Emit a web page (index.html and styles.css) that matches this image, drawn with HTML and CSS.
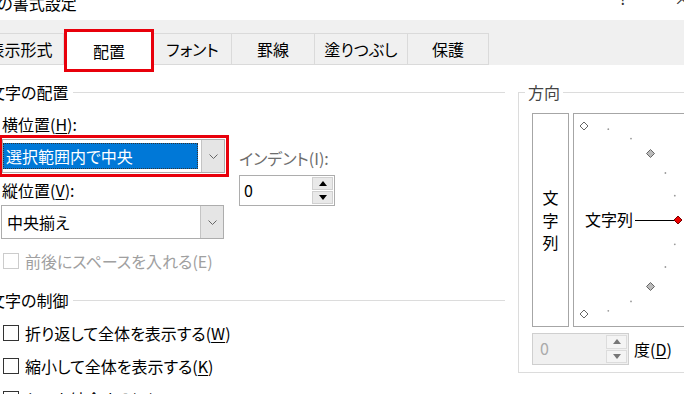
FILE: index.html
```html
<!DOCTYPE html>
<html lang="ja">
<head>
    <meta charset="UTF-8">
    <title>セルの書式設定</title>
    <link rel="stylesheet" href="styles.css">
</head>
<body>
    <div class="dialog">
        <div class="titlebar">
            <span class="title">セルの書式設定</span>
            <span class="tbtn help">?</span>
            <span class="tbtn close">×</span>
        </div>

        <div class="tabband">
            <div class="tab t1">表示形式</div>
            <div class="tab tab-on t2">配置</div>
            <div class="tab t3">フォント</div>
            <div class="tab t4">罫線</div>
            <div class="tab t5">塗りつぶし</div>
            <div class="tab t6">保護</div>
        </div>

        <div class="content">
            <div class="leftcol">
                <div class="heading"><span>文字の配置</span><i class="rule"></i></div>

                <div class="align-body">
                    <div class="selects">
                        <div class="lbl">横位置(<u>H</u>):</div>
                        <div class="mark">
                            <div class="select">
                                <span class="sel-val"><span class="hl">選択範囲内で中央</span></span>
                                <span class="sel-btn"><svg width="9" height="5"><path d="M0.5 0.5 L4.5 4.5 L8.5 0.5" fill="none" stroke="#666"/></svg></span>
                            </div>
                        </div>
                        <div class="lbl lbl-v">縦位置(<u>V</u>):</div>
                        <div class="select sel-v">
                            <span class="sel-val plain">中央揃え</span>
                            <span class="sel-btn"><svg width="9" height="5"><path d="M0.5 0.5 L4.5 4.5 L8.5 0.5" fill="none" stroke="#666"/></svg></span>
                        </div>
                    </div>
                    <div class="indent">
                        <div class="lbl-gray">インデント(I):</div>
                        <div class="spin">
                            <span class="spin-val">0</span>
                            <span class="spin-btns">
                                <b><svg width="8" height="5"><path d="M0 5 L4 0 L8 5Z" fill="#000"/></svg></b>
                                <b><svg width="8" height="5"><path d="M0 0 L4 5 L8 0Z" fill="#000"/></svg></b>
                            </span>
                        </div>
                    </div>
                </div>

                <div class="checks">
                    <div class="check off"><span class="box"></span><span>前後にスペースを入れる(E)</span></div>
                </div>

                <div class="heading h2"><span>文字の制御</span><i class="rule"></i></div>

                <div class="checks">
                    <div class="check"><span class="box"></span><span>折り返して全体を表示する(<u>W</u>)</span></div>
                    <div class="check"><span class="box"></span><span>縮小して全体を表示する(<u>K</u>)</span></div>
                    <div class="check"><span class="box"></span><span>セルを結合する(<u>M</u>)</span></div>
                </div>
            </div>

            <fieldset class="orient">
                <legend>方向</legend>
                <div class="orient-boxes">
                    <div class="vtext"><span>文</span><span>字</span><span>列</span></div>
                    <div class="dial">
                        <svg width="150" height="212">
                            <g fill="#999">
                                <circle cx="34.3" cy="15.2" r="0.9"/>
                                <circle cx="57" cy="24.6" r="0.9"/>
                                <circle cx="91.4" cy="59" r="0.9"/>
                                <circle cx="100.8" cy="81.7" r="0.9"/>
                                <circle cx="100.8" cy="130.3" r="0.9"/>
                                <circle cx="91.4" cy="153" r="0.9"/>
                                <circle cx="57" cy="187.4" r="0.9"/>
                                <circle cx="34.3" cy="196.8" r="0.9"/>
                            </g>
                            <g stroke="#666" stroke-width="1">
                                <polygon points="10,8 14,12 10,16 6,12" fill="#fff"/>
                                <polygon points="76.5,35.5 80.5,39.5 76.5,43.5 72.5,39.5" fill="#bbb"/>
                                <polygon points="76.5,168.5 80.5,172.5 76.5,176.5 72.5,172.5" fill="#bbb"/>
                                <polygon points="10,196 14,200 10,204 6,200" fill="#fff"/>
                            </g>
                            <line x1="61" y1="106.5" x2="100" y2="106.5" stroke="#000"/>
                            <polygon points="104,102 108,106 104,110 100,106" fill="#e00" stroke="#700"/>
                            <text x="11" y="112" class="dial-text">文字列</text>
                        </svg>
                    </div>
                </div>
                <div class="deg-row">
                    <div class="spin deg">
                        <span class="spin-val">0</span>
                        <span class="spin-btns">
                            <b><svg width="8" height="5"><path d="M0 5 L4 0 L8 5Z" fill="#777"/></svg></b>
                            <b><svg width="8" height="5"><path d="M0 0 L4 5 L8 0Z" fill="#777"/></svg></b>
                        </span>
                    </div>
                    <span class="deg-lbl">度(<u>D</u>)</span>
                </div>
            </fieldset>
        </div>
    </div>
</body>
</html>
```

FILE: styles.css
```css
* {
    margin: 0;
    padding: 0;
    box-sizing: border-box;
}

body {
    background-color: #fff;
    overflow: hidden;
    font-family: "Noto Sans CJK JP", "Noto Sans", sans-serif;
    font-size: 16px;
    color: #000;
    font-feature-settings: "palt";
}

u {
    text-decoration: underline;
    text-underline-offset: 2px;
}

.dialog {
    margin-left: -22px;
    width: 780px;
}

/* タイトルバー */
.titlebar {
    height: 20px;
    overflow: hidden;
    display: flex;
    gap: 39px;
    width: 740px;
    padding-right: 26px;
    background-color: #fff;
}

.title {
    margin: -7px 0 0 -11px;
    line-height: 20px;
}

.tbtn {
    width: 20px;
    text-align: center;
    line-height: 20px;
    margin-top: -12px;
    color: #333;
}

.help {
    margin-left: auto;
}

/* タブ */
.tabband {
    height: 45px;
    background-color: #f0f0f0;
    display: flex;
    align-items: flex-end;
}

.tab {
    height: 32px;
    border: 1px solid #dadada;
    border-left: none;
    background-color: #f0f0f0;
    display: flex;
    justify-content: center;
    align-items: center;
    flex-shrink: 0;
}

.t1 { width: 86px; }
.t2 { width: 90px; }
.t3 { width: 78px; }
.t4 { width: 83px; }
.t5 { width: 93px; }
.t6 { width: 81px; }

.tab-on {
    height: 43px;
    margin-bottom: -7px;
    border: 3px solid #e8000b;
    background-color: #fff;
    position: relative;
    z-index: 1;
}

/* 本体 */
.content {
    display: flex;
    padding: 16px 0 0 11px;
}

.leftcol {
    width: 516px;
    flex-shrink: 0;
}

.heading {
    display: flex;
    align-items: center;
    gap: 5px;
    line-height: 22px;
}

.rule {
    flex: 1;
    height: 1px;
    background-color: #dcdcdc;
}

.h2 {
    margin-top: 17px;
}

.align-body {
    display: flex;
    padding-left: 12px;
    margin-top: 10px;
}

.selects {
    width: 228px;
}

.lbl {
    line-height: 22px;
    padding-left: 1px;
}

.lbl-v {
    margin-top: 2px;
}

.mark {
    width: 230px;
    margin-left: -2px;
    border: 3px solid #e8000b;
    padding: 1px 1px 1px 0;
}

.select {
    height: 34px;
    border: 1px solid #adadad;
    background-color: #fff;
    display: flex;
}

.sel-v {
    width: 223px;
    margin-top: 4px;
}

.sel-val {
    flex: 1;
    display: flex;
    align-items: center;
    padding: 3px 3px 3px 0;
}

.sel-val.plain {
    padding-left: 5px;
}

.hl {
    flex: 1;
    height: 100%;
    background-color: #0078d7;
    color: #fff;
    padding-left: 3px;
    line-height: 26px;
    outline: 1px dotted #333;
    outline-offset: -1px;
}

.sel-btn {
    width: 23px;
    background-color: #e5e5e5;
    border-left: 1px solid #c4c4c4;
    display: flex;
    justify-content: center;
    align-items: center;
}

.indent {
    margin-left: 10px;
    padding-top: 34px;
}

.lbl-gray {
    line-height: 22px;
    color: #6d6d6d;
}

.spin {
    display: flex;
    width: 96px;
    height: 31px;
    margin-top: 6px;
    border: 1px solid #adadad;
    background-color: #fff;
}

.spin-val {
    flex: 1;
    padding-left: 4px;
    line-height: 29px;
}

.spin-btns {
    width: 21px;
    margin: 1px 1px 1px 0;
    display: flex;
    flex-direction: column;
    gap: 1px;
    background-color: #fff;
}

.spin-btns b {
    flex: 1;
    display: flex;
    justify-content: center;
    align-items: center;
    background-color: #e9e9e9;
    border: 1px solid #d0d0d0;
}

/* チェックボックス */
.checks {
    padding-left: 14px;
}

.check {
    display: flex;
    align-items: center;
    gap: 6px;
    line-height: 22px;
    margin-top: 11px;
}

.checks:first-of-type .check {
    margin-top: 8px;
}

.box {
    width: 16px;
    height: 16px;
    border: 1px solid #333;
    background-color: #fff;
}

.check.off {
    color: #a0a0a0;
}

.check.off .box {
    border-color: #ccc;
}

/* 方向 */
.orient {
    margin: 0 0 0 13px;
    border: 1px solid #dcdcdc;
    padding: 10px 0 7px 13px;
    width: 220px;
    min-width: 0;
    flex-shrink: 0;
    align-self: flex-start;
}

.orient legend {
    margin-left: -7px;
    padding: 0 3px;
    line-height: 22px;
    color: #444;
}

.orient-boxes {
    display: flex;
    gap: 4px;
}

.vtext {
    width: 37px;
    height: 214px;
    border: 1px solid #a6a6a6;
    display: flex;
    flex-direction: column;
    justify-content: center;
    align-items: center;
    line-height: 22.5px;
}

.dial {
    width: 152px;
    height: 214px;
    border: 1px solid #a6a6a6;
    flex-shrink: 0;
}

.dial svg {
    display: block;
}

.dial-text {
    font-family: "Noto Sans CJK JP", sans-serif;
    font-size: 16px;
    font-feature-settings: "palt";
}

.deg-row {
    display: flex;
    align-items: center;
    margin-top: 6px;
}

.spin.deg {
    width: 97px;
    height: 32px;
    margin-top: 0;
    background-color: #f0f0f0;
    border-color: #cfcfcf;
    color: #aaa;
}

.spin.deg .spin-val {
    padding-left: 7px;
}

.spin.deg .spin-btns {
    background-color: #f0f0f0;
}

.spin.deg .spin-btns b {
    background-color: #f4f4f4;
    border-color: #dcdcdc;
}

.deg-lbl {
    margin-left: 5px;
}
```
